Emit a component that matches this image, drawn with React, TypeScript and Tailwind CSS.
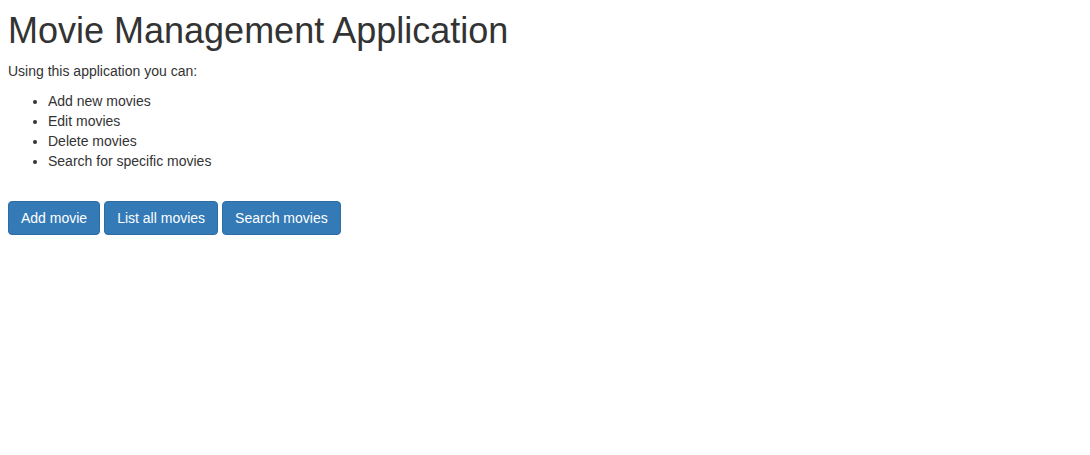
export default function App() {
  return (
    <div className="min-h-[455px] bg-white px-2 pt-[11px] text-[14px] leading-[20px] text-[#333333]" style={{ fontFamily: '"Liberation Sans", Arial, sans-serif' }}>
      <h1 className="mb-[10px] text-[36px] font-normal leading-[1.1]">Movie Management Application</h1>
      <p className="mb-[10px]">Using this application you can:</p>
      <ul className="mb-[10px] list-disc pl-10">
        <li>Add new movies</li>
        <li>Edit movies</li>
        <li>Delete movies</li>
        <li>Search for specific movies</li>
      </ul>
      <div className="h-5" />
      <div className="flex gap-1">
        <button className="rounded-[4px] border border-[#2e6da4] bg-[#337ab7] px-3 py-1.5 text-[14px] leading-[20px] text-white">Add movie</button>
        <button className="rounded-[4px] border border-[#2e6da4] bg-[#337ab7] px-3 py-1.5 text-[14px] leading-[20px] text-white">List all movies</button>
        <button className="rounded-[4px] border border-[#2e6da4] bg-[#337ab7] px-3 py-1.5 text-[14px] leading-[20px] text-white">Search movies</button>
      </div>
    </div>
  );
}
